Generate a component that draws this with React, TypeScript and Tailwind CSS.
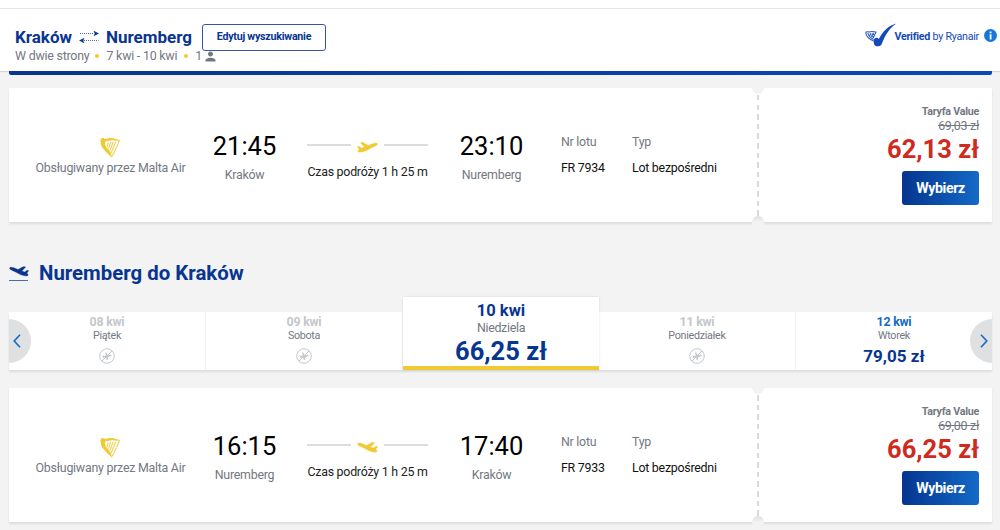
import React from "react";
import { MdPerson } from "react-icons/md";

interface Flight {
  id: string;
  from: string;
  to: string;
  departure: string;
  arrival: string;
  duration: string;
  flightNo: string;
  oldPrice: string;
  price: string;
  direction: "takeoff" | "landing";
}

interface Day {
  date: string;
  weekday: string;
  price?: string;
  selected?: boolean;
}

const outbound: Flight = {
  id: "out",
  from: "Kraków",
  to: "Nuremberg",
  departure: "21:45",
  arrival: "23:10",
  duration: "1 h 25 m",
  flightNo: "FR 7934",
  oldPrice: "69,03 zł",
  price: "62,13 zł",
  direction: "takeoff",
};

const inbound: Flight = {
  id: "in",
  from: "Nuremberg",
  to: "Kraków",
  departure: "16:15",
  arrival: "17:40",
  duration: "1 h 25 m",
  flightNo: "FR 7933",
  oldPrice: "69,00 zł",
  price: "66,25 zł",
  direction: "landing",
};

const days: Day[] = [
  { date: "08 kwi", weekday: "Piątek" },
  { date: "09 kwi", weekday: "Sobota" },
  { date: "10 kwi", weekday: "Niedziela", price: "66,25 zł", selected: true },
  { date: "11 kwi", weekday: "Poniedziałek" },
  { date: "12 kwi", weekday: "Wtorek", price: "79,05 zł" },
];

const Harp = ({ className }: { className?: string }) => (
  <svg viewBox="0 0 20 21" className={className} fill="none">
    <path
      fill="currentColor"
      d="M1 2.200C1.600.8 3.200.6 4 1.400 7 2.600 9.500.6 13 1.200c3 .6 5 1.600 7 1.700-1.600 1-4 .9-6.500.4C10.500 2.800 8 4.200 5.500 4.200c-.8 1.400-.7 3-.1 4.300C6.800 11.500 9.800 13.500 11.200 17l.8 3.800C9 17.500 4.500 14 2.100 10.200 1 8.300.4 6.500 1 5 .2 4.400.200 3.300 1 2.200z"
    />
    <path
      stroke="currentColor"
      strokeWidth="1"
      d="M19.500 2.900c-1 4-4.500 11-7.700 17M8.200 5.500 7.200 9.500M10.700 5 8.600 11.500M13.200 4.800 9.900 13.500M15.700 4.900l-4.600 11.300"
    />
  </svg>
);

const Plane = ({ className }: { className?: string }) => (
  <svg viewBox="0 0 21 11" className={className} fill="currentColor" stroke="currentColor" strokeWidth=".4">
    <path d="M3.500.9C4.500.400 5.800.300 6.800.9L11.500 3.500 16 1.600C18 .8 20.200.8 20.400 1.800 20.600 2.800 19 3.800 17 4.600L13.500 6.300 9.500 8.500C7 9.600 4.500 10.100 2.200 10.300 1.200 10.200.9 8.900 1.100 8.200L2.500 7.500.3 4.700 1.900 4.200 4.500 6 7.500 4.900z" />
  </svg>
);

const NoFlights = () => (
  <svg viewBox="0 0 16 16" className="mt-[5px] h-4 w-4 text-[#c3c7cc]" fill="none" stroke="currentColor">
    <circle cx="8" cy="8" r="7.300" strokeWidth="1" />
    <path d="M3 13 13 3" strokeWidth="1" />
    <path
      fill="currentColor"
      stroke="none"
      d="M3.500 7.500 4.300 7.400 5 8 6.900 7.600 6 4.500 7.100 4.500 8.900 7.200 11.800 6.800Q12.900 7.100 12.600 7.900L9.400 8.900 8.700 12 7.600 12.100 7.200 9.300 5 9.500 4.200 10.300 3.500 10.300 4 9z"
    />
  </svg>
);

const VerifiedMark = () => (
  <svg viewBox="0 0 32 24" className="-mt-[5px] h-6 w-8" fill="none">
    <path
      fill="#1349b9"
      d="M31.500.4C25.500 4.500 21 9.600 16.500 21.500c-.9 2.300-6 2.500-7.100.3-.7-1.800-1-3.200-.6-5 .8-2.300 3.600-2.900 5-.9C18 8.500 23 2.300 31.500.4z"
    />
    <path
      stroke="#3460c2"
      strokeWidth="1.100"
      d="M.5 9.500c1.500-1.600 3 0 4.800-.7 2-.8 4 .2 6.200.3M1 9.500c-.5 3.500 2.500 6 7.500 8.500M3 10c.2 3 2.500 4.800 5.500 6.500M5 10.500l4 4.500M7.500 10l2.500 3M10.800 9.500 8 15M8.500 9.800 6.500 14M6 10l-1.500 3"
    />
  </svg>
);

const SearchHeader = () => (
  <header className="h-[71px] bg-white pt-2 shadow-[0_1px_1px_rgba(0,0,0,0.12)]">
    <div className="flex justify-between border-t border-[#e6e6e6] pl-[15px] pr-[3px]">
      <div className="pt-[15px]">
        <div className="flex h-[24px] items-start">
          <div className="flex items-center pt-[3px] text-[17px] leading-5 font-bold text-[#073590]">
            <span className="w-[64px]">Kraków</span>
            <svg viewBox="0 0 20 12" className="h-3 w-5" fill="#073590" stroke="#073590">
              <path d="M1 2.500h14M5 9.500h14.500" strokeWidth="1" strokeDasharray="1 1" opacity=".75" fill="none" />
              <path d="m14.500-.3 5.500 2.800-5.500 2.800 1.200-2.800zM5.500 6.700 0 9.500l5.500 2.800-1.200-2.800z" stroke="none" />
            </svg>
            <span className="ml-[7px] w-[96px]">Nuremberg</span>
          </div>
          <button className="h-[27px] w-[124px] shrink-0 rounded-[3px] border border-[#3459a7] text-[10.700px] font-bold tracking-[-0.25px] text-[#073590]">
            Edytuj wyszukiwanie
          </button>
        </div>
        <div className="flex items-center text-[12.400px] leading-4 tracking-[-0.22px] text-[#737882]">
          <span>W dwie strony</span>
          <span className="mr-[7px] ml-[6px] h-1 w-1 rounded-full bg-[#f1c933]" />
          <span>7 kwi - 10 kwi</span>
          <span className="mr-[7px] ml-[7px] h-1 w-1 rounded-full bg-[#f1c933]" />
          <span>1</span>
          <MdPerson className="ml-px h-[15px] w-[15px]" />
        </div>
      </div>
      <div className="flex h-6 items-center pt-[28px] text-[10.700px] text-[#1349b9]">
        <VerifiedMark />
        <span className="-ml-[3px] tracking-[-0.25px] whitespace-nowrap">
          <b>Verified</b> by Ryanair
        </span>
        <span className="-mt-[4px] ml-[5px] flex h-[13px] w-[13px] items-center justify-center rounded-full bg-[#1676dc]">
          <svg viewBox="0 0 13 13" className="h-[13px] w-[13px]" fill="#fff">
            <path d="M5.700 2.500h1.800v1.700H5.700zM5.700 5.200h1.800v5.200H5.700z" />
          </svg>
        </span>
      </div>
    </div>
  </header>
);

const FlightCard = ({ flight }: { flight: Flight }) => (
  <section className="relative ml-[9px] flex h-[134px] w-[983px] bg-white text-[12.400px] leading-4 tracking-[-0.25px] text-[#737882] shadow-[0_2px_2px_rgba(0,0,0,0.09)]">
    <div className="flex w-[203px] flex-col items-center pt-[49px]">
      <Harp className="mr-[2px] h-[21px] w-5 text-[#f1c933]" />
      <span className="mt-[2px] whitespace-nowrap">Obsługiwany przez Malta Air</span>
    </div>
    <div className="flex w-[65px] flex-col items-center pt-[43px]">
      <span className="text-[25.500px] leading-[30px] tracking-normal text-black">{flight.departure}</span>
      <span className="mt-[6px]">{flight.from}</span>
    </div>
    <div className="ml-[30px] w-[121px] pt-[53px]">
      <div className="flex h-[13px] justify-between">
        <span className="mt-[3px] h-[1.500px] w-11 bg-[#dcdcdc]" />
        {flight.direction === "takeoff" ? (
          <Plane className="mt-[1px] h-[11px] w-[21px] text-[#f1c933]" />
        ) : (
          <Plane className="mt-[1px] h-[11px] w-[21px] -scale-x-100 text-[#f1c933]" />
        )}
        <span className="mt-[3px] h-[1.500px] w-11 bg-[#dcdcdc]" />
      </div>
      <div className="mt-[10px] whitespace-nowrap text-center text-[#222]">Czas podróży {flight.duration}</div>
    </div>
    <div className="ml-[31px] flex w-[65px] flex-col items-center pt-[43px]">
      <span className="text-[25.500px] leading-[30px] tracking-normal text-black">{flight.arrival}</span>
      <span className="mt-[6px]">{flight.to}</span>
    </div>
    <div className="ml-[37px] w-[71px] pt-[46px]">
      <div>Nr lotu</div>
      <div className="mt-[10px] text-[#111]">{flight.flightNo}</div>
    </div>
    <div className="w-[125px] pt-[46px]">
      <div>Typ</div>
      <div className="mt-[10px] text-[#111]">Lot bezpośredni</div>
    </div>
    <div className="mt-[7px] h-[121px] w-[1.500px] bg-[repeating-linear-gradient(to_bottom,#dadada_0,#dadada_5.500px,transparent_5.500px,transparent_9.600px)]" />
    {/* ticket stub notches */}
    <span className="absolute -top-[6px] left-[743px] h-3 w-3 rounded-full bg-[#f3f3f3]" />
    <span className="absolute -bottom-[6px] left-[743px] h-3 w-3 rounded-full bg-linear-to-b from-[#dedede] to-[#f3f3f3] to-50%" />
    <div className="flex flex-1 flex-col items-end pr-[13px] pt-[16px]">
      <span className="text-[10.700px] font-bold">Taryfa Value</span>
      <span className="-mt-[2px] leading-[15px] line-through">{flight.oldPrice}</span>
      <span className="mt-px text-[25.500px] leading-[31px] font-bold tracking-normal text-[#d02a1e]">
        {flight.price}
      </span>
      <button className="mt-[6px] h-[34px] w-[77px] rounded-[3px] bg-linear-to-r from-[#073590] to-[#1569c7] pb-px text-[14.200px] font-bold tracking-[-0.4px] text-white">
        Wybierz
      </button>
    </div>
  </section>
);

const DayTab = ({ day }: { day: Day }) => {
  if (day.selected) {
    return (
      <div className="relative flex h-[73px] flex-1 flex-col items-center border-b-4 border-[#f1c933] bg-white pt-1 text-[#073590] shadow-[0_0_2px_rgba(0,0,0,0.12)]">
        <span className="text-[16.500px] leading-5 font-bold">{day.date}</span>
        <span className="-mt-px text-[12.400px] leading-4 tracking-[-0.3px] text-[#737882]">{day.weekday}</span>
        <span className="text-[25.500px] leading-[30px] font-bold">{day.price}</span>
      </div>
    );
  }
  return (
    <div className="flex h-[58px] flex-1 flex-col items-center border-r border-[#f1f1f1] bg-white pt-[2px] last:border-r-0">
      <span
        className={`text-[12.400px] leading-4 font-bold tracking-[-0.25px] ${day.price ? "text-[#1569c7]" : "text-[#c3c7cc]"}`}
      >
        {day.date}
      </span>
      <span className="-mt-px text-[10.700px] leading-[14px] tracking-[-0.28px] text-[#737882]">{day.weekday}</span>
      {day.price ? (
        <span className="mt-[3px] text-[17px] leading-5 font-bold text-[#073590]">{day.price}</span>
      ) : (
        <NoFlights />
      )}
    </div>
  );
};

const DateCarousel = () => (
  <div className="relative ml-[9px] flex w-[983px] items-end">
    <div className="absolute inset-x-0 bottom-0 h-[58px] shadow-[0_2px_2px_rgba(0,0,0,0.09)]" />
    <div className="relative flex flex-1 items-end">
      {days.map((day) => (
        <DayTab key={day.date} day={day} />
      ))}
    </div>
    <button className="absolute left-0 top-[22px] flex h-11 w-[22px] items-center justify-center rounded-r-full bg-[#dfe0e2]">
      <svg viewBox="0 0 8 14" className="mr-[6px] h-[14px] w-2" fill="none" stroke="#1569c7" strokeWidth="1.600">
        <path d="M7 .8 1.200 7 7 13.200" />
      </svg>
    </button>
    <button className="absolute right-0 top-[22px] flex h-11 w-[22px] items-center justify-center rounded-l-full bg-[#dfe0e2]">
      <svg viewBox="0 0 8 14" className="ml-[5px] h-[14px] w-2" fill="none" stroke="#1569c7" strokeWidth="1.600">
        <path d="m1 .8 5.800 6.200L1 13.200" />
      </svg>
    </button>
  </div>
);

const App: React.FC = () => {
  return (
    <div className="h-[530px] w-[1000px] overflow-hidden bg-[#f3f3f3] font-['Roboto',sans-serif]">
      <SearchHeader />
      <div className="relative mb-[13px] ml-[9px] h-[4px] w-[983px] rounded-b-[2px] bg-linear-to-r from-[#073590] to-[#0a47b8]" />
      <FlightCard flight={outbound} />
      <div className="flex h-[75px] items-start pl-[9px] pt-[39px] text-[#073590]">
        <div className="mt-[5px] w-5">
          <Plane className="h-[11px] w-5 -scale-x-100" />
          <div className="mt-[3px] h-px w-[19px] bg-[#4a6bb0]" />
        </div>
        <h2 className="ml-[10px] text-[20.400px] leading-6 font-bold">Nuremberg do Kraków</h2>
      </div>
      <DateCarousel />
      <div className="h-[18px]" />
      <FlightCard flight={inbound} />
    </div>
  );
};

export default App;
